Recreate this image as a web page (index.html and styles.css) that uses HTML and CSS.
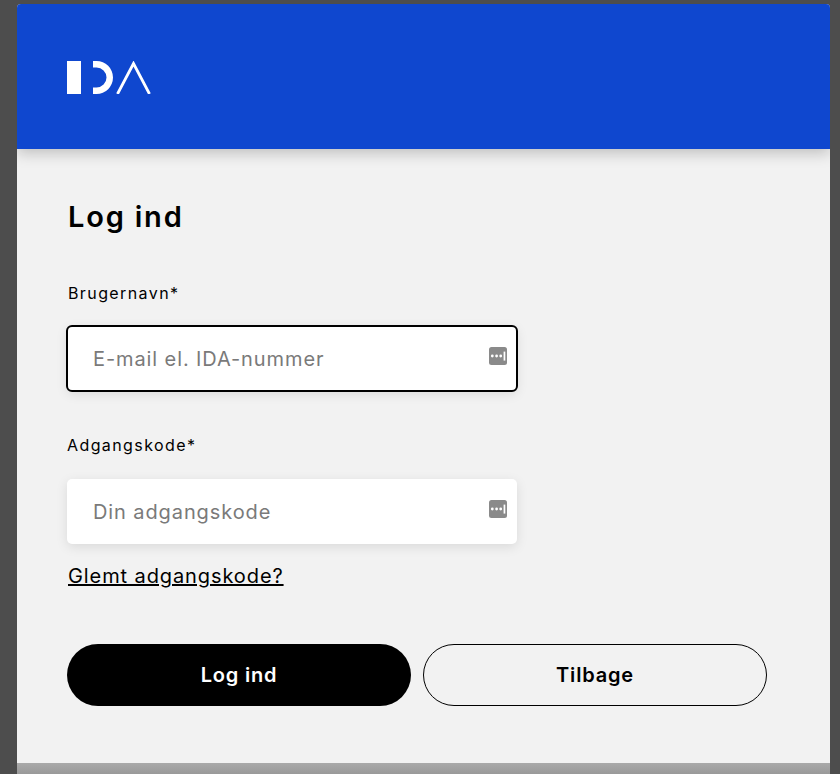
FILE: index.html
```html
<!DOCTYPE html>
<html lang="en">
<head>
    <meta charset="UTF-8">
    <meta name="viewport" content="width=device-width, initial-scale=1.0">
    <title>Log ind</title>
    <link rel="stylesheet" href="styles.css">
</head>
<body>
    <div class="login-modal">
        <div class="login-header">
            <svg class="logo" width="84" height="33" viewBox="0 0 84 33" aria-label="IDA">
                <rect x="0" y="0" width="14" height="33" fill="#fff"/>
                <path d="M26 0h3.5a16.5 16.5 0 0 1 0 33H26v-6.5h3.5a10 10 0 0 0 0-20H26z" fill="#fff"/>
                <path d="M50.5 33L66.5 2.5L82.5 33" fill="none" stroke="#fff" stroke-width="2.8"/>
            </svg>
        </div>
        <form class="login-form">
            <h1 class="login-title">Log ind</h1>

            <label class="field-label" for="username">Brugernavn*</label>
            <div class="input-box input-focus">
                <input class="text-input" id="username" type="text" placeholder="E-mail el. IDA-nummer">
                <svg class="key-icon" width="18" height="18" viewBox="0 0 18 18">
                    <rect width="18" height="18" rx="2.5" fill="#8a8a8a"/>
                    <circle cx="3.3" cy="9" r="1.4" fill="#fff"/>
                    <circle cx="7.6" cy="9" r="1.4" fill="#fff"/>
                    <circle cx="11.7" cy="9" r="1.4" fill="#fff"/>
                    <rect x="14.6" y="4.6" width="1.7" height="9" fill="#fff"/>
                </svg>
            </div>

            <label class="field-label second-label" for="password">Adgangskode*</label>
            <div class="input-box">
                <input class="text-input" id="password" type="password" placeholder="Din adgangskode">
                <svg class="key-icon" width="18" height="18" viewBox="0 0 18 18">
                    <rect width="18" height="18" rx="2.5" fill="#8a8a8a"/>
                    <circle cx="3.3" cy="9" r="1.4" fill="#fff"/>
                    <circle cx="7.6" cy="9" r="1.4" fill="#fff"/>
                    <circle cx="11.7" cy="9" r="1.4" fill="#fff"/>
                    <rect x="14.6" y="4.6" width="1.7" height="9" fill="#fff"/>
                </svg>
            </div>

            <a class="forgot-link" href="#">Glemt adgangskode?</a>

            <div class="button-row">
                <button class="btn btn-primary" type="button">Log ind</button>
                <button class="btn btn-outline" type="button">Tilbage</button>
            </div>
        </form>
    </div>
    <div class="modal-bottom"></div>
</body>
</html>
```

FILE: styles.css
```css
html, body {
    height: 100%;
}
body {
    font-family: Inter, 'Open Sans', sans-serif;
    background-color: #4d4d4d;
    color: #000;
    margin: 0;
    padding: 4px 10px 0 17px;
    box-sizing: border-box;
    overflow: hidden;
}
.login-modal {
    background-color: #f2f2f2;
    height: 759px;
    border-radius: 4px 4px 0 0;
    overflow: hidden;
}
.login-header {
    background-color: #0f47cf;
    height: 145px;
    padding: 57px 0 0 50px;
    box-sizing: border-box;
    box-shadow: 0 4px 14px rgba(0, 0, 0, 0.22);
    position: relative;
}
.logo {
    display: block;
}
.login-form {
    padding: 51px 50px 0 50px;
    display: flex;
    flex-direction: column;
    align-items: flex-start;
}
.login-title {
    font-size: 29px;
    font-weight: 600;
    line-height: 34px;
    letter-spacing: 1.8px;
    margin: 0 0 49px 1px;
}
.field-label {
    font-size: 16px;
    line-height: 20px;
    letter-spacing: 1.4px;
    margin: 0 0 23px 1px;
}
.second-label {
    margin-top: 44px;
    margin-bottom: 24px;
    margin-left: 0;
}
.input-box {
    width: 450px;
    height: 65px;
    background-color: #fff;
    border-radius: 5px;
    box-shadow: 0 3px 12px rgba(0, 0, 0, 0.1);
    display: flex;
    align-items: center;
    padding: 0 10px 0 26px;
    box-sizing: border-box;
}
.input-focus {
    outline: 2px solid #000;
    outline-offset: -1px;
}
.text-input {
    flex: 1;
    border: none;
    outline: none;
    background: transparent;
    font-family: inherit;
    font-size: 20px;
    letter-spacing: 0.9px;
    color: #000;
    min-width: 0;
    padding: 0;
}
.text-input::placeholder {
    color: #7a7a7a;
    opacity: 1;
}
.key-icon {
    flex: none;
    margin-top: -5px;
}
.forgot-link {
    font-size: 20px;
    line-height: 26px;
    letter-spacing: 0.9px;
    color: #000;
    margin-top: 19px;
    margin-left: 1px;
}
.button-row {
    display: flex;
    gap: 12px;
    margin-top: 55px;
}
.btn {
    height: 62px;
    border-radius: 31px;
    font-family: inherit;
    font-size: 20px;
    font-weight: 600;
    letter-spacing: 0.8px;
    color: #000;
    cursor: pointer;
}
.btn-primary {
    width: 344px;
    background-color: #000;
    color: #fff;
    border: none;
}
.btn-outline {
    width: 344px;
    background-color: transparent;
    border: 1px solid #000;
}
.modal-bottom {
    height: 11px;
    background: linear-gradient(#aaaaaa, #999999);
}
```
